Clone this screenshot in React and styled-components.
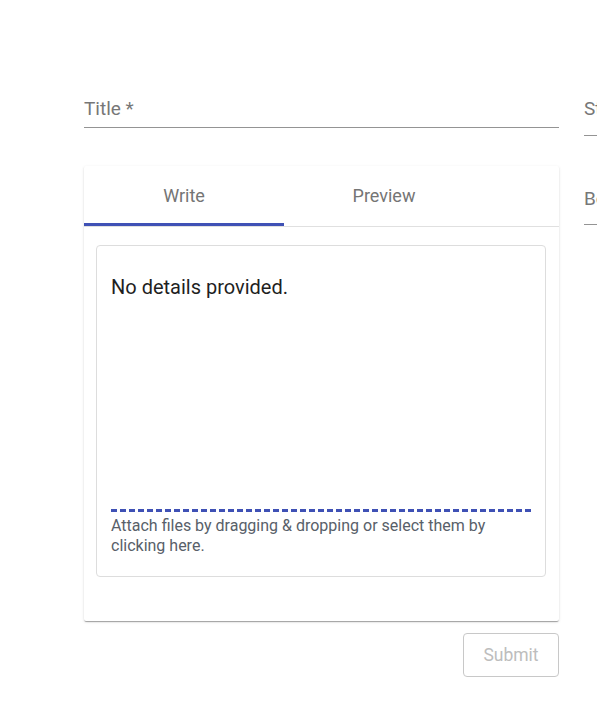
import React, { useState } from "react";
import styled, { createGlobalStyle } from "styled-components";

// ###################################################
// Styled components

const GlobalStyle = createGlobalStyle`
  html, body {
    margin: 0;
    padding: 0;
    background: #ffffff;
    overflow: hidden;
  }
  body {
    font-family: Roboto, "Liberation Sans", Arial, sans-serif;
  }
`;

const Page = styled.div`
  display: flex;
  gap: 25px;
  padding: 97px 0 40px 84px;
  width: 1000px;
`;

const MainColumn = styled.div`
  width: 475px;
  flex-shrink: 0;
`;

const SideColumn = styled.div`
  width: 300px;
  display: flex;
  flex-direction: column;
  gap: 51px;
`;

const Field = styled.div`
  padding-bottom: ${(p) => p.$pad}px;
  border-bottom: 1px solid #949494;
`;

const FieldLabel = styled.div`
  font-size: 19px;
  line-height: 24px;
  color: #777777;
`;

const Card = styled.div`
  margin-top: 38px;
  background: #ffffff;
  border-radius: 2px;
  box-shadow: 0 2px 1px -1px rgba(0, 0, 0, 0.2), 0 1px 1px 0 rgba(0, 0, 0, 0.14),
    0 1px 3px 0 rgba(0, 0, 0, 0.12);
`;

const TabBar = styled.div`
  display: flex;
  border-bottom: 1px solid #e0e0e0;
`;

const Tab = styled.button`
  position: relative;
  width: 200px;
  height: 60px;
  border: none;
  background: transparent;
  padding: 0 0 2px;
  font-family: inherit;
  font-size: 18px;
  color: #757575;
  cursor: pointer;

  &::after {
    content: "";
    position: absolute;
    left: 0;
    right: 0;
    bottom: 0;
    height: 3px;
    background: ${(p) => (p.$active ? "#3f51b5" : "transparent")};
  }
`;

const CardBody = styled.div`
  padding: 18px 13px 44px 12px;
`;

const EditorBox = styled.div`
  border: 1px solid #dddddd;
  border-radius: 4px;
  padding: 15px 14px 20px 14px;
`;

const TextArea = styled.div`
  height: 235px;
  padding-top: 13px;
  font-size: 20px;
  line-height: 27px;
  color: #1f1f1f;
`;

const DropLine = styled.div`
  height: 3px;
  background: repeating-linear-gradient(
    to right,
    #3f51b5 0 6px,
    transparent 6px 9px
  );
`;

const AttachHint = styled.div`
  margin-top: 4px;
  font-size: 16px;
  line-height: 20px;
  color: #586069;
  cursor: pointer;
`;

const Actions = styled.div`
  display: flex;
  justify-content: flex-end;
  margin-top: 12px;
`;

const SubmitButton = styled.button`
  width: 96px;
  height: 44px;
  border: 1px solid #c8c8c8;
  border-radius: 4px;
  background: #ffffff;
  font-family: inherit;
  font-size: 17.5px;
  color: #bdbdbd;
`;

// ###################################################

const App = () => {
  const [tab, setTab] = useState("write");

  return (
    <>
      <GlobalStyle />
      <Page>
        <MainColumn>
          <Field $pad={6}>
            <FieldLabel>Title *</FieldLabel>
          </Field>

          <Card>
            <TabBar>
              <Tab $active={tab === "write"} onClick={() => setTab("write")}>
                Write
              </Tab>
              <Tab $active={tab === "preview"} onClick={() => setTab("preview")}>
                Preview
              </Tab>
            </TabBar>
            <CardBody>
              <EditorBox>
                <TextArea>No details provided.</TextArea>
                <DropLine />
                <AttachHint>
                  Attach files by dragging &amp; dropping or select them by
                  clicking here.
                </AttachHint>
              </EditorBox>
            </CardBody>
          </Card>

          <Actions>
            <SubmitButton disabled>Submit</SubmitButton>
          </Actions>
        </MainColumn>

        <SideColumn>
          <Field $pad={14}>
            <FieldLabel>Status</FieldLabel>
          </Field>
          <Field $pad={13}>
            <FieldLabel>Board</FieldLabel>
          </Field>
        </SideColumn>
      </Page>
    </>
  );
};

export default App;
